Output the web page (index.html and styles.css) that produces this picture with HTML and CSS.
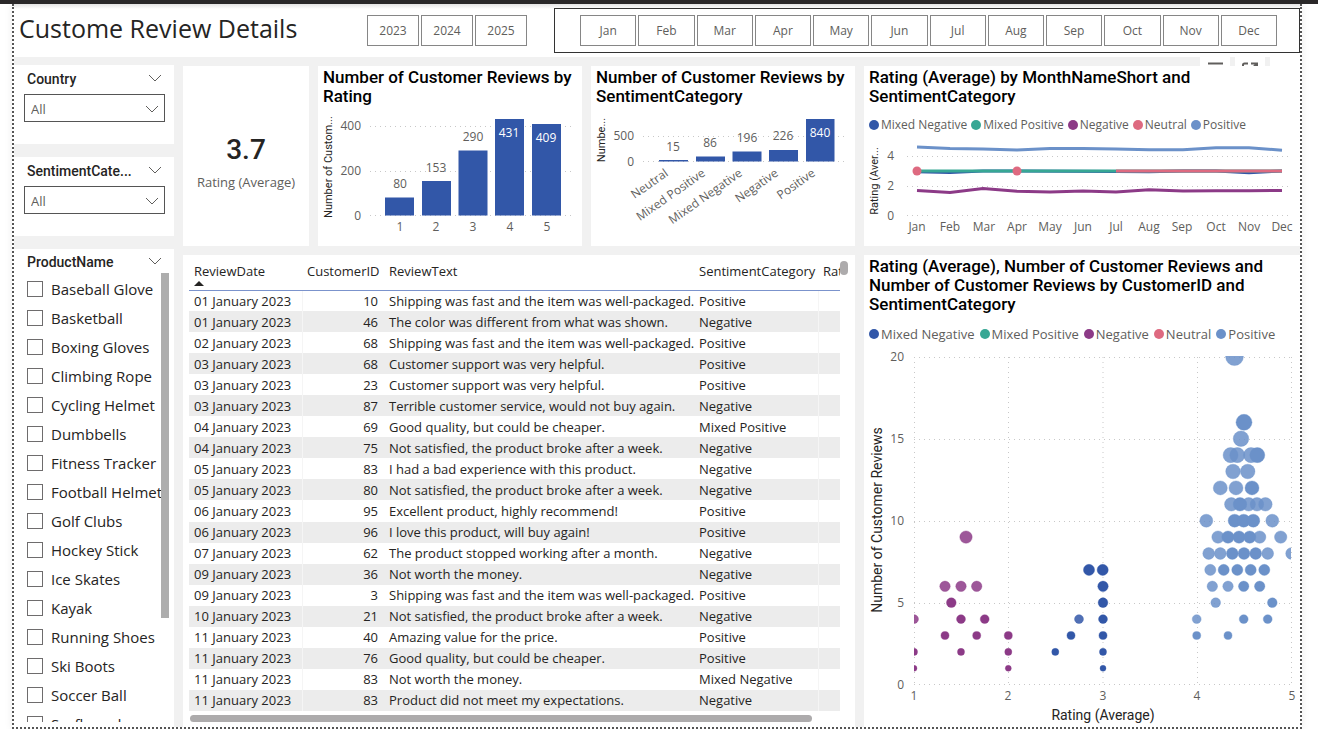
FILE: index.html
```html
<!DOCTYPE html>
<html lang="en">
<head>
<meta charset="utf-8">
<meta name="viewport" content="width=device-width, initial-scale=1">
<title>Custome Review Details</title>
<link rel="stylesheet" href="styles.css">
</head>
<body>
<div class="canvas">
  <header class="header">
    <h1 class="page-title">Custome Review Details</h1>
    <div class="years">
      <button class="tile" type="button">2023</button>
      <button class="tile" type="button">2024</button>
      <button class="tile" type="button">2025</button>
    </div>
    <div class="months">
      <button class="tile" type="button">Jan</button>
      <button class="tile" type="button">Feb</button>
      <button class="tile" type="button">Mar</button>
      <button class="tile" type="button">Apr</button>
      <button class="tile" type="button">May</button>
      <button class="tile" type="button">Jun</button>
      <button class="tile" type="button">Jul</button>
      <button class="tile" type="button">Aug</button>
      <button class="tile" type="button">Sep</button>
      <button class="tile" type="button">Oct</button>
      <button class="tile" type="button">Nov</button>
      <button class="tile" type="button">Dec</button>
    </div>
  </header>

  <div class="board">
    <aside class="side">
      <section class="slicer">
        <div class="slicer-head">
          <label class="slicer-title" for="country">Country</label>
          <svg class="chevron" viewBox="0 0 14 8" aria-hidden="true"><path d="M1 1l6 6 6-6"/></svg>
        </div>
        <div class="dropdown">
          <select id="country"><option>All</option></select>
          <svg class="chevron dropdown-arrow" viewBox="0 0 14 8" aria-hidden="true"><path d="M1 1l6 6 6-6"/></svg>
        </div>
      </section>
      <section class="slicer">
        <div class="slicer-head">
          <label class="slicer-title" for="sentiment">SentimentCate...</label>
          <svg class="chevron" viewBox="0 0 14 8" aria-hidden="true"><path d="M1 1l6 6 6-6"/></svg>
        </div>
        <div class="dropdown">
          <select id="sentiment"><option>All</option></select>
          <svg class="chevron dropdown-arrow" viewBox="0 0 14 8" aria-hidden="true"><path d="M1 1l6 6 6-6"/></svg>
        </div>
      </section>
      <section class="slicer products">
        <div class="slicer-head">
          <h2 class="slicer-title">ProductName</h2>
          <svg class="chevron" viewBox="0 0 14 8" aria-hidden="true"><path d="M1 1l6 6 6-6"/></svg>
        </div>
        <div class="list-area">
          <div class="list">
            <label class="item"><input type="checkbox">Baseball Glove</label>
            <label class="item"><input type="checkbox">Basketball</label>
            <label class="item"><input type="checkbox">Boxing Gloves</label>
            <label class="item"><input type="checkbox">Climbing Rope</label>
            <label class="item"><input type="checkbox">Cycling Helmet</label>
            <label class="item"><input type="checkbox">Dumbbells</label>
            <label class="item"><input type="checkbox">Fitness Tracker</label>
            <label class="item"><input type="checkbox">Football Helmet</label>
            <label class="item"><input type="checkbox">Golf Clubs</label>
            <label class="item"><input type="checkbox">Hockey Stick</label>
            <label class="item"><input type="checkbox">Ice Skates</label>
            <label class="item"><input type="checkbox">Kayak</label>
            <label class="item"><input type="checkbox">Running Shoes</label>
            <label class="item"><input type="checkbox">Ski Boots</label>
            <label class="item"><input type="checkbox">Soccer Ball</label>
            <label class="item"><input type="checkbox">Surfboard</label>
          </div>
          <div class="list-bar"></div>
        </div>
      </section>
    </aside>

    <main class="grid">
      <section class="card kpi">
        <div class="kpi-value">3.7</div>
        <div class="kpi-label">Rating (Average)</div>
      </section>

      <section class="card">
        <h2 class="card-title">Number of Customer Reviews by Rating</h2>
        <svg class="chart" viewBox="0 0 264 136" role="img" aria-label="Number of customer reviews by rating">
          <g class="gridline"><path d="M52 16.5H256M52 61.5H256M52 105.5H256"/></g>
          <g class="bar">
            <path d="M67 87.500h29v18h-29zM104 71h29v34.500h-29zM140.500 40.500h29v65h-29zM177 9h29v96.500h-29zM214 14h29v91.500h-29z"/>
          </g>
          <g class="tick end"><text x="43" y="20">400</text><text x="43" y="65">200</text><text x="43" y="110">0</text></g>
          <g class="tick mid">
            <text x="82" y="78">80</text><text x="118" y="62">153</text><text x="155" y="31">290</text>
            <text class="inside" x="191" y="27">431</text><text class="inside" x="228" y="32">409</text>
            <text x="82" y="121">1</text><text x="118" y="121">2</text><text x="155" y="121">3</text><text x="192" y="121">4</text><text x="229" y="121">5</text>
          </g>
          <text class="axis small" transform="translate(14 57) rotate(-90)">Number of Custom...</text>
        </svg>
      </section>

      <section class="card">
        <h2 class="card-title">Number of Customer Reviews by SentimentCategory</h2>
        <svg class="chart" viewBox="0 0 264 136" role="img" aria-label="Number of customer reviews by sentiment category">
          <g class="gridline"><path d="M52 26.500H256M52 51.500H256"/></g>
          <g class="bar">
            <path d="M68 50h29v1.500h-29zM105 46.500h29v5h-29zM141.500 41.500h29v10h-29zM178 40h29v11.500h-29zM215 9h28.500v42.500h-28.500z"/>
          </g>
          <g class="tick end"><text x="43" y="30">500</text><text x="43" y="56">0</text></g>
          <g class="tick mid">
            <text x="82" y="41">15</text><text x="119" y="37">86</text><text x="156" y="32">196</text><text x="192" y="30">226</text><text class="inside" x="229" y="27">840</text>
          </g>
          <g class="tick end">
            <text transform="translate(78 65) rotate(-35)">Neutral</text>
            <text transform="translate(115 65) rotate(-35)">Mixed Positive</text>
            <text transform="translate(152 65) rotate(-35)">Mixed Negative</text>
            <text transform="translate(188 65) rotate(-35)">Negative</text>
            <text transform="translate(225 65) rotate(-35)">Positive</text>
          </g>
          <text class="axis small" transform="translate(14 30) rotate(-90)">Numbe...</text>
        </svg>
      </section>

      <section class="card">
        <div class="card-tools">
          <button class="tool" type="button" aria-label="Filters"><svg viewBox="0 0 30 9"><path d="M8 6.500h15"/></svg></button>
          <button class="tool" type="button" aria-label="Focus mode"><svg viewBox="0 0 30 9"><path d="M8 9V8q0-1.500 1.500-1.500H13M16 6.500h6V9M22 6.500l-4 4"/></svg></button>
          <button class="tool" type="button" aria-label="More options"></button>
        </div>
        <h2 class="card-title">Rating (Average) by MonthNameShort and SentimentCategory</h2>
        <ul class="legend">
          <li class="mixed-negative">Mixed Negative</li>
          <li class="mixed-positive">Mixed Positive</li>
          <li class="negative">Negative</li>
          <li class="neutral">Neutral</li>
          <li class="positive">Positive</li>
        </ul>
        <svg class="chart" viewBox="0 0 436 108" role="img" aria-label="Average rating by month">
          <g transform="translate(0 -2)">
          <g class="gridline"><path d="M43 20.500H428M43 50.500H428M43 79.500H428"/></g>
          <g class="series">
            <polyline stroke="#6b91c9" points="53,11 86,12.500 119,13 153,14 186,12.500 219,12.500 252,13 285,13.700 319,13.700 352,11.700 385,11.700 418,14.300"/>
            <polyline stroke="#8c3a87" points="53,54.500 86,56.500 119,52.500 153,55.300 186,56 219,55 252,56 285,53.800 319,55 352,54.800 385,54.800 418,54.500"/>
            <polyline stroke="#3257a8" points="53,35.700 86,36.500 119,35 153,35 252,35.500 285,35.800 319,35 352,35 385,36.700 418,35"/>
            <polyline stroke="#37a794" points="53,35 418,35"/>
            <polyline stroke="#de6a80" points="252,35 418,35"/>
          </g>
          <circle cx="53" cy="35" r="4.500" fill="#de6a80"/>
          <circle cx="153" cy="35" r="4.500" fill="#de6a80"/>
          <g class="tick end"><text x="30" y="24">4</text><text x="30" y="54">2</text><text x="30" y="84">0</text></g>
          <g class="tick mid">
            <text x="53" y="95">Jan</text><text x="86" y="95">Feb</text><text x="120" y="95">Mar</text><text x="153" y="95">Apr</text>
            <text x="186" y="95">May</text><text x="219" y="95">Jun</text><text x="252" y="95">Jul</text><text x="285" y="95">Aug</text>
            <text x="318" y="95">Sep</text><text x="352" y="95">Oct</text><text x="385" y="95">Nov</text><text x="418" y="95">Dec</text>
          </g>
          <text class="axis small" transform="translate(14 45) rotate(-90)">Rating (Aver...</text>
          </g>
        </svg>
      </section>

      <section class="card reviews">
        <div class="table-area">
          <table class="table">
            <colgroup><col class="c-date"><col class="c-id"><col><col class="c-cat"><col class="c-rating"></colgroup>
            <thead>
              <tr><th>ReviewDate<svg class="sort" viewBox="0 0 10 5" aria-hidden="true"><path d="M0 5l5-5 5 5z"/></svg></th><th class="num">CustomerID</th><th>ReviewText</th><th>SentimentCategory</th><th>Rating</th></tr>
            </thead>
            <tbody>
              <tr><td>01 January 2023</td><td class="num">10</td><td>Shipping was fast and the item was well-packaged.</td><td>Positive</td><td></td></tr>
              <tr><td>01 January 2023</td><td class="num">46</td><td>The color was different from what was shown.</td><td>Negative</td><td></td></tr>
              <tr><td>02 January 2023</td><td class="num">68</td><td>Shipping was fast and the item was well-packaged.</td><td>Positive</td><td></td></tr>
              <tr><td>03 January 2023</td><td class="num">68</td><td>Customer support was very helpful.</td><td>Positive</td><td></td></tr>
              <tr><td>03 January 2023</td><td class="num">23</td><td>Customer support was very helpful.</td><td>Positive</td><td></td></tr>
              <tr><td>03 January 2023</td><td class="num">87</td><td>Terrible customer service, would not buy again.</td><td>Negative</td><td></td></tr>
              <tr><td>04 January 2023</td><td class="num">69</td><td>Good quality, but could be cheaper.</td><td>Mixed Positive</td><td></td></tr>
              <tr><td>04 January 2023</td><td class="num">75</td><td>Not satisfied, the product broke after a week.</td><td>Negative</td><td></td></tr>
              <tr><td>05 January 2023</td><td class="num">83</td><td>I had a bad experience with this product.</td><td>Negative</td><td></td></tr>
              <tr><td>05 January 2023</td><td class="num">80</td><td>Not satisfied, the product broke after a week.</td><td>Negative</td><td></td></tr>
              <tr><td>06 January 2023</td><td class="num">95</td><td>Excellent product, highly recommend!</td><td>Positive</td><td></td></tr>
              <tr><td>06 January 2023</td><td class="num">96</td><td>I love this product, will buy again!</td><td>Positive</td><td></td></tr>
              <tr><td>07 January 2023</td><td class="num">62</td><td>The product stopped working after a month.</td><td>Negative</td><td></td></tr>
              <tr><td>09 January 2023</td><td class="num">36</td><td>Not worth the money.</td><td>Negative</td><td></td></tr>
              <tr><td>09 January 2023</td><td class="num">3</td><td>Shipping was fast and the item was well-packaged.</td><td>Positive</td><td></td></tr>
              <tr><td>10 January 2023</td><td class="num">21</td><td>Not satisfied, the product broke after a week.</td><td>Negative</td><td></td></tr>
              <tr><td>11 January 2023</td><td class="num">40</td><td>Amazing value for the price.</td><td>Positive</td><td></td></tr>
              <tr><td>11 January 2023</td><td class="num">76</td><td>Good quality, but could be cheaper.</td><td>Positive</td><td></td></tr>
              <tr><td>11 January 2023</td><td class="num">83</td><td>Not worth the money.</td><td>Mixed Negative</td><td></td></tr>
              <tr><td>11 January 2023</td><td class="num">83</td><td>Product did not meet my expectations.</td><td>Negative</td><td></td></tr>
            </tbody>
          </table>
          <div class="v-bar"></div>
        </div>
        <div class="h-bar"></div>
      </section>

      <section class="card scatter">
        <h2 class="card-title">Rating (Average), Number of Customer Reviews and Number of Customer Reviews by CustomerID and SentimentCategory</h2>
        <ul class="legend large">
          <li class="mixed-negative">Mixed Negative</li>
          <li class="mixed-positive">Mixed Positive</li>
          <li class="negative">Negative</li>
          <li class="neutral">Neutral</li>
          <li class="positive">Positive</li>
        </ul>
        <svg class="chart" viewBox="0 0 436 376" role="img" aria-label="Customer reviews by average rating">
          <defs><clipPath id="plot"><rect x="50" y="6" width="377" height="329"/></clipPath></defs>
          <g class="gridline"><path d="M50 7.500H428M50 89.500H428M50 171.500H428M50 253.500H428M50 334.500H428M50.500 7V335M144.500 7V335M239 7V335M333.500 7V335M427.500 7V335"/></g>
          <g id="points" clip-path="url(#plot)"></g>
          <g class="tick end"><text x="40" y="11">20</text><text x="40" y="93">15</text><text x="40" y="175">10</text><text x="40" y="257">5</text><text x="40" y="339">0</text></g>
          <g class="tick mid"><text x="50" y="350">1</text><text x="144" y="350">2</text><text x="239" y="350">3</text><text x="333" y="350">4</text><text x="428" y="350">5</text></g>
          <text class="axis" transform="translate(18 170) rotate(-90)">Number of Customer Reviews</text>
          <text class="axis" x="239" y="370">Rating (Average)</text>
        </svg>
      </section>
    </main>
  </div>
</div>
<script src="script.js"></script>
</body>
</html>
```
FILE: styles.css
```css
* { box-sizing: border-box; }

body {
  margin: 0;
  min-height: 100vh;
  display: flex;
  flex-direction: column;
  border-top: 4px solid #2a2829;
  background: #fff;
  color: #252423;
  font-family: "Open Sans", "Noto Sans", sans-serif;
  font-size: 12px;
}

h1, h2, ul { margin: 0; padding: 0; font-weight: 400; }

button, select, input { font: inherit; color: inherit; }

.canvas {
  flex: 1;
  display: flex;
  flex-direction: column;
  margin: 0 16px 0 12px;
  border: 2px dotted #555;
  border-top: 0;
  box-shadow: 0 0 8px rgba(0, 0, 0, 0.08);
}

/* Header */

.header {
  display: flex;
  align-items: flex-start;
  padding: 4px 0 4px 5px;
  background: linear-gradient(#e4e4e4, #fff 5px);
}

.page-title {
  width: 348px;
  font-size: 25px;
  line-height: 40px;
  white-space: nowrap;
}

.years { display: flex; gap: 2px; width: 160px; padding-top: 7px; }

.months {
  flex: 1;
  display: flex;
  gap: 2px;
  margin-left: 27px;
  padding: 6px 22px 6px 25px;
  border: 1px solid #333;
}

.tile {
  flex: 1;
  height: 31px;
  padding: 0;
  border: 1px solid #868686;
  background: #fff;
  color: #605e5c;
  font-size: 12px;
}

/* Board */

.board { flex: 1; display: flex; gap: 9px; background: #f1f1f1; }

.side {
  flex: none;
  width: 160px;
  display: flex;
  flex-direction: column;
  gap: 13px;
  padding-top: 8px;
}

.slicer { height: 79px; padding: 4px 9px 0 10px; background: #fff; }

.slicer-head {
  display: flex;
  align-items: flex-start;
  justify-content: space-between;
  padding: 0 3px;
}

.slicer-title {
  font-family: Roboto, sans-serif;
  font-weight: 500;
  font-size: 14px;
  line-height: 20px;
}

.chevron { width: 14px; height: 8px; margin-top: 5px; fill: none; stroke: #605e5c; }

.dropdown { position: relative; margin-top: 5px; }

.dropdown select {
  display: block;
  width: 100%;
  height: 28px;
  padding: 2px 6px 0;
  border: 1px solid #555;
  border-radius: 0;
  background: #fff;
  color: #605e5c;
  font-size: 13px;
  appearance: none;
}

.dropdown-arrow { position: absolute; right: 6px; top: 6px; pointer-events: none; }

.products { flex: 1; height: auto; display: flex; flex-direction: column; padding: 3px 5px 5px 10px; }
.products .slicer-head { padding-right: 7px; }

.list-area { flex: 1; display: flex; contain: size; overflow: hidden; }
.list { flex: 1; min-width: 0; overflow: hidden; padding: 2px 0 0 3px; }

.item {
  display: flex;
  align-items: center;
  gap: 8px;
  height: 29px;
  font-size: 15px;
  white-space: nowrap;
}

.item input {
  flex: none;
  appearance: none;
  width: 16px;
  height: 16px;
  margin: 0;
  border: 1px solid #6e6c6d;
  background: #fff;
}

.list-bar { width: 8px; height: 345px; margin-top: 1px; background: #adadad; }

.grid {
  flex: 1;
  min-width: 0;
  display: grid;
  grid-template-columns: 126fr 264fr 264fr 436fr;
  grid-template-rows: auto 1fr;
  gap: 9px;
  padding-top: 9px;
}

.card { position: relative; min-width: 0; background: #fff; }

.card-title {
  padding: 2px 5px 4px;
  color: #000;
  font-family: Roboto, sans-serif;
  font-weight: 500;
  font-size: 17px;
  line-height: 19px;
}

.kpi {
  display: flex;
  flex-direction: column;
  align-items: center;
  justify-content: center;
  padding-top: 14px;
}

.kpi-value { font-family: Roboto, sans-serif; font-weight: 500; font-size: 28px; line-height: 38px; }
.kpi-label { color: #605e5c; font-size: 13px; line-height: 26px; }

/* Charts */

.chart { display: block; width: 100%; height: auto; }
.gridline { fill: none; stroke: #c8c8c8; stroke-dasharray: 1 4; }
.bar { fill: #3257a8; }
.series { fill: none; stroke-width: 3; }
.tick { fill: #605e5c; font-size: 12px; }
.tick .inside { fill: #fff; }
.end { text-anchor: end; }
.mid { text-anchor: middle; }
.axis { fill: #252423; font-family: Roboto, sans-serif; font-size: 14px; text-anchor: middle; }
.small { font-size: 11px; }

.legend { display: flex; gap: 4px; padding: 2px 5px 0; list-style: none; color: #605e5c; font-size: 12px; line-height: 26px; white-space: nowrap; }
.legend li { display: flex; align-items: center; gap: 2px; }
.legend li::before { content: ""; width: 10px; height: 10px; border-radius: 50%; background: currentColor; }
.legend .mixed-negative::before { background: #3257a8; }
.legend .mixed-positive::before { background: #37a794; }
.legend .negative::before { background: #8c3a87; }
.legend .neutral::before { background: #de6a80; }
.legend .positive::before { background: #6b91c9; }
.legend.large { gap: 5px; padding-top: 0; font-size: 13px; line-height: 32px; }

.card-tools { position: absolute; top: -9px; right: 0; display: flex; gap: 5px; }
.tool { width: 30px; height: 9px; padding: 0; border: 0; background: #fff; overflow: hidden; }
.tool svg { display: block; width: 30px; height: 9px; fill: none; stroke: #605e5c; stroke-width: 2; }

/* Reviews table */

.reviews { grid-column: 1 / 4; display: flex; flex-direction: column; padding: 0 7px 5px 6px; }
.table-area { flex: 1; display: flex; align-items: stretch; }

.table {
  flex: 1;
  min-width: 0;
  width: 100%;
  height: 100%;
  table-layout: fixed;
  border-collapse: collapse;
  font-size: 13px;
}

.c-date { width: 113px; }
.c-id { width: 82px; }
.c-cat { width: 124px; }
.c-rating { width: 22px; }

.table th, .table td { padding: 0 5px; line-height: 16px; text-align: left; font-weight: 400; white-space: nowrap; overflow: hidden; }
.table th { position: relative; height: 35px; padding-bottom: 2px; border-bottom: 1px solid #7b93cc; }
.table td { height: 21px; }
.table .num { text-align: right; padding-right: 6px; }
.table tbody tr:nth-child(even) { background: #ececec; }
.table td:first-child, .table td:nth-child(4) { border-right: 1px solid #f5f5f5; }
.table th:last-child { text-overflow: clip; }

.sort { position: absolute; left: 5px; bottom: 4px; width: 10px; height: 5px; fill: #252423; }
.v-bar { width: 8px; height: 14px; margin-top: 6px; border-radius: 4px; background: #adabac; }
.h-bar { width: 622px; max-width: 95%; height: 7px; margin: 4px 0 0 1px; border-radius: 4px; background: #adabac; }
```
FILE: script.js
```js
// Each row: review count, then plot x positions; solid marks overlap more customers.
const series = [
  { color: "#8c3a87", rows: [
    { y: 9, soft: [102] },
    { y: 6, soft: [81, 97, 112.7] },
    { y: 5, solid: [87.3] },
    { y: 4, soft: [50], solid: [97, 120.7] },
    { y: 3, solid: [81, 112.7, 144.3] },
    { y: 2, solid: [50, 97, 144.3] },
    { y: 1, solid: [50, 144.3] }
  ] },
  { color: "#3257a8", rows: [
    { y: 7, solid: [225, 238.7] },
    { y: 6, solid: [239] },
    { y: 5, solid: [239] },
    { y: 4, soft: [215], solid: [239] },
    { y: 3, solid: [207, 239] },
    { y: 2, solid: [191.3, 239] },
    { y: 1, solid: [239] }
  ] },
  { color: "#6b91c9", rows: [
    { y: 20, soft: [370.5] },
    { y: 16, solid: [380] },
    { y: 15, soft: [377] },
    { y: 14, soft: [366.6, 373.3, 387], solid: [393.3] },
    { y: 13, soft: [369, 383.7] },
    { y: 12, soft: [356.3, 372], solid: [388] },
    { y: 11, soft: [367.3, 384.7, 393, 401.4], solid: [376] },
    { y: 10, soft: [342.3, 408.3], solid: [370.6, 379.7, 389.3] },
    { y: 9, soft: [354, 395.7, 416.7], solid: [364, 375, 385.7] },
    { y: 8, soft: [344.7, 356.3, 403.7, 427.6], solid: [368.3, 380, 391.7] },
    { y: 7, soft: [346.3], solid: [359.7, 373.3, 386.7, 400.3] },
    { y: 6, soft: [348.3, 364], solid: [379.7, 395.7] },
    { y: 5, soft: [351.7], solid: [408.3] },
    { y: 4, soft: [332.7], solid: [379.7, 403.7] },
    { y: 3, solid: [332.7, 364] }
  ] }
];

const group = document.getElementById("points");

function mark(x, y, color, opacity) {
  const c = document.createElementNS("http://www.w3.org/2000/svg", "circle");
  c.setAttribute("cx", x);
  c.setAttribute("cy", 334.7 - 16.4 * y);
  c.setAttribute("r", Math.sqrt(5.3 + 3.67 * y));
  c.setAttribute("fill", color);
  c.setAttribute("fill-opacity", opacity);
  c.setAttribute("stroke", color);
  c.setAttribute("stroke-opacity", 0.6);
  c.setAttribute("stroke-width", 0.6);
  group.appendChild(c);
}

for (const s of series) {
  for (const row of s.rows) {
    for (const x of row.soft || []) mark(x, row.y, s.color, 0.85);
    for (const x of row.solid || []) mark(x, row.y, s.color, 1);
  }
}
```
